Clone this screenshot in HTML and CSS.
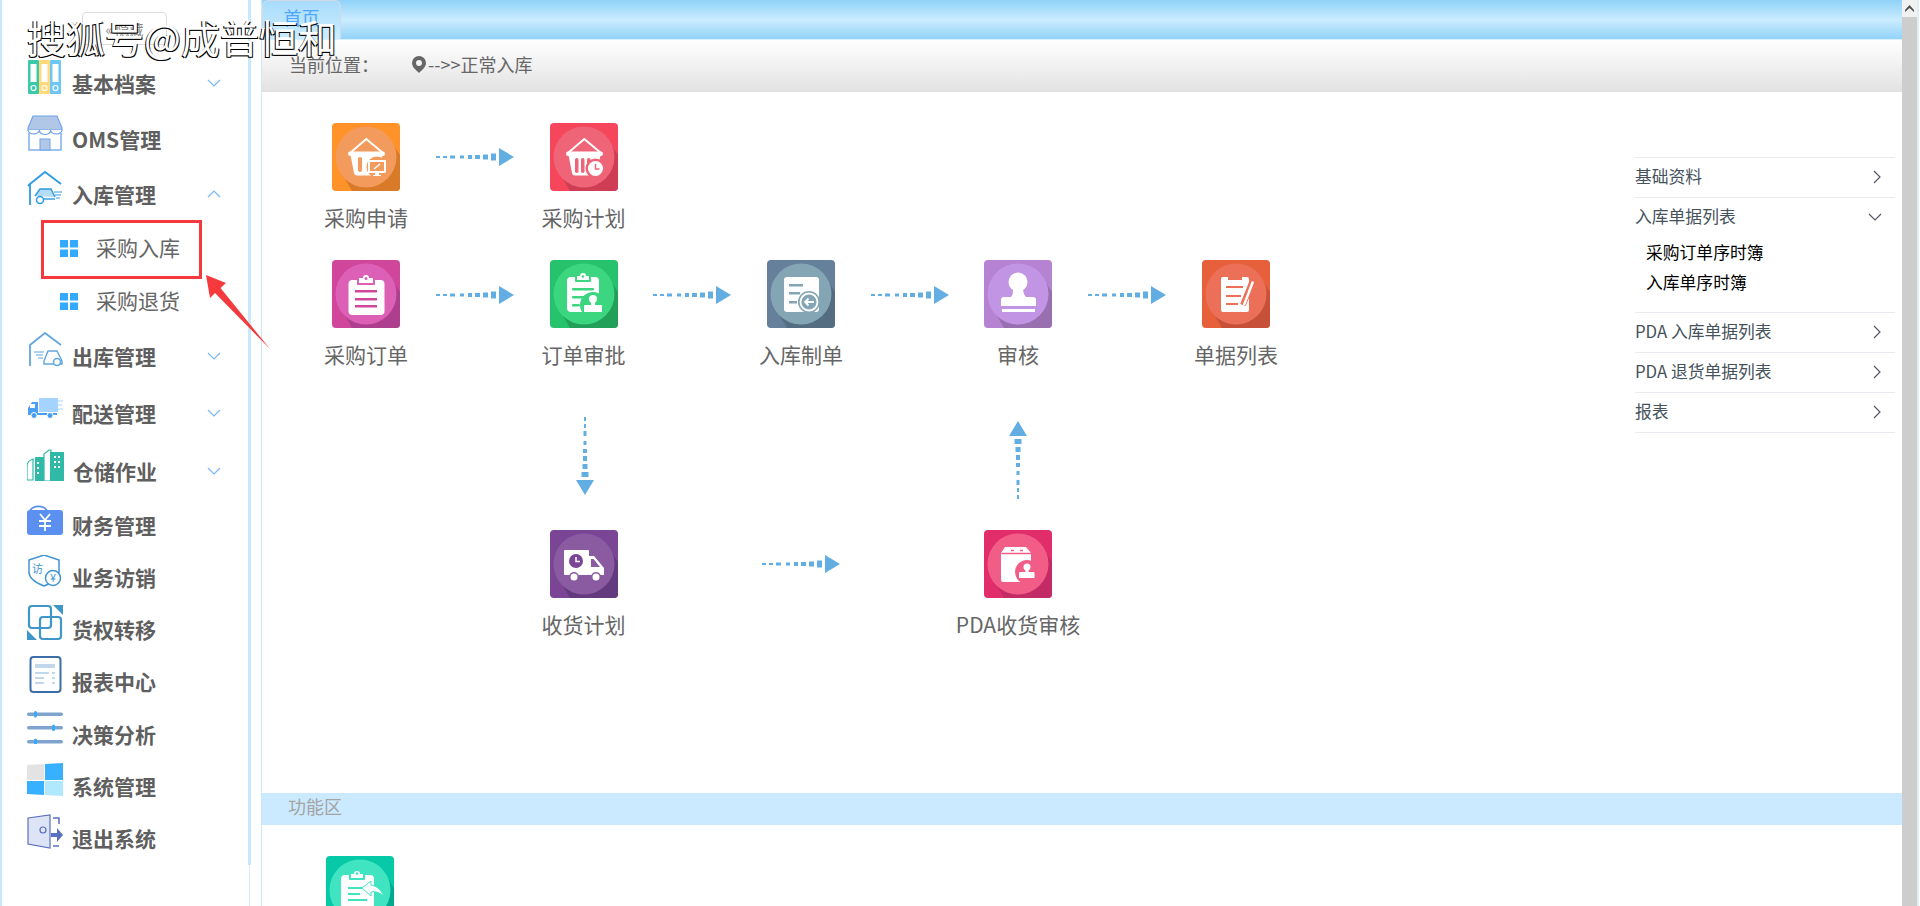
FILE: index.html
```html
<!DOCTYPE html>
<html lang="zh-CN">
<head>
<meta charset="utf-8">
<title>正常入库</title>
<link rel="stylesheet" href="styles.css">
</head>
<body>
<svg class="defs" width="0" height="0" aria-hidden="true">
  <symbol id="flow-arrow" viewBox="0 0 78 18">
    <rect x="0" y="8" width="4" height="2"/><rect x="7" y="8" width="4" height="2"/>
    <rect x="14" y="7.5" width="5" height="3"/><rect x="24" y="7.5" width="4" height="3"/>
    <rect x="32" y="7" width="4" height="4"/><rect x="39" y="7" width="5" height="4"/>
    <rect x="47" y="6.5" width="5" height="5"/><rect x="55" y="5.5" width="5" height="7"/>
    <polygon points="63,0 78,9 63,18"/>
  </symbol>
  <symbol id="caret-down" viewBox="0 0 14 8"><path d="M1 1l6 6 6-6" fill="none" stroke="currentColor" stroke-width="1.2"/></symbol>
  <symbol id="caret-up" viewBox="0 0 14 8"><path d="M1 7l6-6 6 6" fill="none" stroke="currentColor" stroke-width="1.2"/></symbol>
  <symbol id="caret-right" viewBox="0 0 8 14"><path d="M1 1l6 6-6 6" fill="none" stroke="currentColor" stroke-width="1.2"/></symbol>
  <symbol id="tile-base" viewBox="0 0 68 68">
    <rect class="t-bg" width="68" height="68" rx="4"/>
    <path class="t-dk" d="M12 54L20 68H64a4 4 0 0 0 4-4V32L56 14z"/>
    <circle class="t-c" cx="34" cy="34" r="30.5"/>
  </symbol>
  <symbol id="basket" viewBox="0 0 68 68">
    <path d="M18 30L34.300 16 51 30" fill="none" stroke="#fff" stroke-width="2"/>
    <rect x="16" y="28.500" width="37" height="4.500" rx="2.200" fill="#fff"/>
    <path d="M18.500 32H50.500L47 50a3 3 0 0 1-3 2.500H25a3 3 0 0 1-3-2.500z" fill="#fff"/>
  </symbol>
</svg>

<div class="watermark">搜狐号@成普恒和</div>

<aside class="sidebar">
  <button class="collapse">« 隐藏</button>
  <ul class="menu">
    <li class="menu-item">
      <svg class="micon" width="36" height="34" viewBox="0 0 36 34"><rect x="1" width="11" height="34" rx="1" fill="#3cc9a8"/><rect x="12" width="11" height="34" rx="1" fill="#ffd97a"/><rect x="23" width="11" height="34" rx="1" fill="#6cc6f8"/><g fill="#fff"><rect x="3.500" y="4" width="6" height="18"/><rect x="14.500" y="4" width="6" height="18"/><rect x="25.500" y="4" width="6" height="18"/></g><g fill="none" stroke="#fff" stroke-width="1.200"><circle cx="6.500" cy="28" r="2.500"/><circle cx="17.500" cy="28" r="2.500"/><circle cx="28.500" cy="28" r="2.500"/></g></svg>
      <span class="mtext">基本档案</span>
      <svg class="caret"><use href="#caret-down"/></svg>
    </li>
    <li class="menu-item m4">
      <svg class="micon" width="36" height="36" viewBox="0 0 36 36"><path d="M2 18V35H34V18" fill="#fff" stroke="#7fb0ee" stroke-width="1.500"/><path d="M6 1H30L35 13V15H1V13z" fill="#b0c7e8" stroke="#6fa3ea" stroke-width="1.200"/><path d="M1 15a5.700 4.500 0 0 0 11.300 0a5.700 4.500 0 0 0 11.400 0a5.700 4.500 0 0 0 11.300 0" fill="#fff" stroke="#6fa3ea" stroke-width="1.200"/><rect x="13" y="24" width="10" height="11" fill="#b0c7e8" stroke="#6fa3ea"/></svg>
      <span class="mtext">OMS管理</span>
    </li>
    <li class="menu-item m3">
      <svg class="micon" width="36" height="36" viewBox="0 0 36 36"><path d="M3 35V14L18 2 34 14M3 14L1 16" fill="none" stroke="#2d9be0" stroke-width="1.800"/><path d="M8 26l5-7h11l4 8" fill="#b4dcf6" stroke="#2d9be0" stroke-width="1.400"/><path d="M11 29H28" stroke="#2d9be0" stroke-width="1.400"/><circle cx="13" cy="30" r="3.500" fill="#fff" stroke="#2d9be0" stroke-width="1.500"/><path d="M27 22h8M28 25h6M29 28h4" stroke="#2d9be0"/></svg>
      <span class="mtext">入库管理</span>
      <svg class="caret"><use href="#caret-up"/></svg>
    </li>
    <li class="menu-item sub m1">
      <svg class="grid4" width="18" height="17" viewBox="0 0 18 17"><rect width="8" height="7.500"/><rect x="10" width="8" height="7.500"/><rect y="9.500" width="8" height="7.500"/><rect x="10" y="9.500" width="8" height="7.500"/></svg>
      <span class="stext">采购入库</span>
    </li>
    <li class="menu-item sub m1">
      <svg class="grid4" width="18" height="17" viewBox="0 0 18 17"><rect width="8" height="7.500"/><rect x="10" width="8" height="7.500"/><rect y="9.500" width="8" height="7.500"/><rect x="10" y="9.500" width="8" height="7.500"/></svg>
      <span class="stext">采购退货</span>
    </li>
    <li class="menu-item m4">
      <svg class="micon" width="36" height="35" viewBox="0 0 36 35"><path d="M3 34V13L18 1 34 13" fill="none" stroke="#62a6dc" stroke-width="1.800"/><path d="M7 20h10M9 23h7M11 26h5" stroke="#62a6dc" stroke-width="1.200"/><path d="M17 29l4-10h9l5 10v3H17z" fill="#fff" stroke="#62a6dc" stroke-width="1.400"/><circle cx="30" cy="30" r="3.500" fill="#fff" stroke="#62a6dc" stroke-width="1.500"/></svg>
      <span class="mtext">出库管理</span>
      <svg class="caret"><use href="#caret-down"/></svg>
    </li>
    <li class="menu-item m5">
      <svg class="micon tight" width="36" height="21" viewBox="0 0 36 21"><rect x="12" width="19" height="14" fill="#a4d4ff"/><path d="M11 4H5L1 10V17H30V15H11z" fill="#4a9ff2"/><rect x="3" y="6" width="5" height="4" fill="#fff"/><circle cx="7" cy="17.500" r="3" fill="#4a9ff2" stroke="#fff"/><circle cx="23" cy="17.500" r="3" fill="#4a9ff2" stroke="#fff"/><path d="M31 3h5M31 7h4M31 11h5" stroke="#a4d4ff"/></svg>
      <span class="mtext">配送管理</span>
      <svg class="caret"><use href="#caret-down"/></svg>
    </li>
    <li class="menu-item m6">
      <svg class="micon" width="37" height="32" viewBox="0 0 37 32"><path d="M0 31V18a8 8 0 0 1 6-8v21z" fill="none" stroke="#2fb9a6" stroke-width="1.200"/><rect x="8" y="8" width="9" height="24" fill="#2fb9a6"/><path d="M17 32V5l5-4h2v31z" fill="none" stroke="#2fb9a6" stroke-width="1.200"/><rect x="23" y="3" width="14" height="29" fill="#2fb9a6"/><g fill="#fff"><rect x="10" y="13" width="2" height="2"/><rect x="10" y="18" width="2" height="2"/><rect x="10" y="23" width="2" height="2"/><rect x="27" y="7" width="2" height="2"/><rect x="31" y="7" width="2" height="2"/><rect x="27" y="12" width="2" height="2"/><rect x="31" y="12" width="2" height="2"/><rect x="27" y="17" width="2" height="2"/><rect x="31" y="17" width="2" height="2"/></g></svg>
      <span class="mtext">仓储作业</span>
      <svg class="caret"><use href="#caret-down"/></svg>
    </li>
    <li class="menu-item m2">
      <svg class="micon" width="36" height="32" viewBox="0 0 36 32"><path d="M3 8a9 7 0 0 1 17 0" fill="none" stroke="#5b8ff0" stroke-width="1.800"/><rect y="7" width="36" height="25" rx="3" fill="#5b8ff0"/><path d="M13 11l5 6 5-6M18 17v11M12 18h12M12 23h12" fill="none" stroke="#fff" stroke-width="1.800"/></svg>
      <span class="mtext">财务管理</span>
    </li>
    <li class="menu-item">
      <svg class="micon" width="36" height="32" viewBox="0 0 36 32"><path d="M2 5L17 0l15 5v12c0 7-7 11-15 14C9 28 2 24 2 17z" fill="#fff" stroke="#3f96d0" stroke-width="1.500"/><text x="5" y="18" class="shield-text">访</text><circle cx="26" cy="23" r="7.500" fill="#fff" stroke="#3f96d0" stroke-width="1.500"/><text x="26" y="27" class="yen-text">¥</text></svg>
      <span class="mtext">业务访销</span>
    </li>
    <li class="menu-item">
      <svg class="micon" width="36" height="37" viewBox="0 0 36 37"><g fill="none" stroke="#3f96c8" stroke-width="2.200"><rect x="2" y="2" width="22" height="22" rx="3"/><rect x="13" y="13" width="21" height="22" rx="3"/></g><path d="M26 1L36 1V11zM0 26L10 36H0z" fill="#3f96c8"/></svg>
      <span class="mtext">货权转移</span>
    </li>
    <li class="menu-item">
      <svg class="micon" width="36" height="37" viewBox="0 0 36 37"><rect x="3.500" y="1" width="30" height="35" rx="3" fill="#fff" stroke="#3d6ea8" stroke-width="2"/><rect x="8" y="8" width="20" height="4" fill="#c2d6ec"/><g fill="#c2d6ec"><rect x="8" y="16" width="14" height="2"/><rect x="25" y="16" width="3" height="2"/><rect x="8" y="21" width="9" height="2"/><rect x="25" y="21" width="3" height="2"/><rect x="8" y="26" width="9" height="2"/><rect x="25" y="26" width="3" height="2"/></g></svg>
      <span class="mtext">报表中心</span>
    </li>
    <li class="menu-item m1">
      <svg class="micon" width="36" height="33" viewBox="0 0 36 33"><g fill="#7ea3cc"><rect y="1.500" width="36" height="3.500" rx="1.700"/><rect y="15" width="36" height="3.500" rx="1.700"/><rect y="29" width="36" height="3.500" rx="1.700"/></g><g fill="#33aaff"><rect x="7" y="0" width="3" height="6.500" rx="1.500"/><rect x="25" y="13.500" width="3" height="6.500" rx="1.500"/><rect x="7" y="27.500" width="3" height="6.500" rx="1.500"/></g></svg>
      <span class="mtext">决策分析</span>
    </li>
    <li class="menu-item">
      <svg class="micon" width="36" height="33" viewBox="0 0 36 33"><path d="M0 2L17 1V17H0z" fill="#e3e3e3"/><path d="M18 1L36 0V17H18z" fill="#36b0ff"/><path d="M0 18H17V32L0 31z" fill="#36b0ff"/><path d="M18 18H36V33L18 32z" fill="#b0e8ff"/></svg>
      <span class="mtext">系统管理</span>
    </li>
    <li class="menu-item">
      <svg class="micon" width="36" height="35" viewBox="0 0 36 35"><path d="M1 4L23 1V34L1 30z" fill="#dde4f5" stroke="#5a6fc0" stroke-width="1.200"/><circle cx="16" cy="16" r="3" fill="none" stroke="#5a6fc0" stroke-width="1.200"/><path d="M26 4h6v6M26 32h6" fill="none" stroke="#5a6fc0" stroke-width="1.500"/><path d="M24 19h6v-5l6 7-6 7v-5h-6z" fill="#5a6fc0"/></svg>
      <span class="mtext">退出系统</span>
    </li>
  </ul>
  <div class="callout-box"></div>
  <svg class="callout-arrow" width="66" height="76" viewBox="0 0 66 76"><polygon points="1,1 21,9 15.500,14 65,75 10,19 5,24" fill="#f5393c"/></svg>
</aside>

<main class="main">
  <nav class="tabbar"><div class="tab">首页</div></nav>
  <div class="crumb">
    <span class="crumb-label">当前位置：</span>
    <svg class="pin" width="14" height="17" viewBox="0 0 14 17"><path fill-rule="evenodd" d="M7 0a7 7 0 0 1 7 7c0 4-4 7-7 10C4 14 0 11 0 7a7 7 0 0 1 7-7zm0 4a3 3 0 1 0 0 6 3 3 0 0 0 0-6z" fill="#666"/></svg>
    <span>--&gt;&gt;正常入库</span>
  </div>

  <section class="workspace">
    <div class="diagram">
      <svg class="flow a-r1"><use href="#flow-arrow"/></svg>
      <svg class="flow a-r2a"><use href="#flow-arrow"/></svg>
      <svg class="flow a-r2b"><use href="#flow-arrow"/></svg>
      <svg class="flow a-r2c"><use href="#flow-arrow"/></svg>
      <svg class="flow a-r2d"><use href="#flow-arrow"/></svg>
      <svg class="flow a-r3"><use href="#flow-arrow"/></svg>
      <svg class="flow a-down"><use href="#flow-arrow"/></svg>
      <svg class="flow a-up"><use href="#flow-arrow"/></svg>

      <div class="node c1 r1 orange">
        <svg class="tile" viewBox="0 0 68 68"><use href="#tile-base"/><use href="#basket"/><rect class="cut" x="26" y="34" width="4" height="15" rx="2"/><circle class="cut" cx="45" cy="44" r="10.500"/><rect x="36" y="37" width="18" height="13" rx="1" fill="#fff"/><rect class="cut" x="38" y="39" width="14" height="9"/><path d="M42 46l6-5" stroke="#fff" stroke-width="1.500"/><path d="M43 50h4v2h2v1h-8v-1h2z" fill="#fff"/></svg>
        <div class="label">采购申请</div>
      </div>
      <div class="node c2 r1 red">
        <svg class="tile" viewBox="0 0 68 68"><use href="#tile-base"/><use href="#basket"/><g class="cut"><rect x="25" y="35" width="3.500" height="15" rx="1.700"/><rect x="31" y="35" width="3.500" height="15" rx="1.700"/><rect x="37" y="35" width="3.500" height="12" rx="1.700"/></g><circle class="cut" cx="45.500" cy="45.500" r="10"/><circle cx="45.500" cy="45.500" r="7.500" fill="#fff"/><path class="cut-line" d="M45.500 41v5h4"/></svg>
        <div class="label">采购计划</div>
      </div>
      <div class="node c1 r2 pink">
        <svg class="tile" viewBox="0 0 68 68"><use href="#tile-base"/><rect x="16.500" y="20" width="36" height="35" rx="4" fill="#fff"/><rect class="cut" x="25" y="16" width="18" height="9" rx="1"/><path d="M27 23v-5h4a3 3 0 0 1 6 0h4v5z" fill="#fff"/><circle class="cut" cx="34" cy="18.500" r="1.500"/><g class="bar"><rect x="23" y="30" width="22" height="2.500"/><rect x="23" y="38" width="22" height="2.500"/><rect x="23" y="45" width="22" height="2.500"/></g></svg>
        <div class="label">采购订单</div>
      </div>
      <div class="node c2 r2 green">
        <svg class="tile" viewBox="0 0 68 68"><use href="#tile-base"/><rect x="17" y="17" width="32" height="35" rx="4" fill="#fff"/><rect class="cut" x="25" y="14" width="16" height="8" rx="1"/><path d="M27 20v-4h3a3 3 0 0 1 6 0h3v4z" fill="#fff"/><circle class="cut" cx="33" cy="16.500" r="1.300"/><g class="bar"><rect x="22" y="28" width="22" height="2.500" rx="1.200"/><rect x="22" y="36" width="14" height="2.500" rx="1.200"/><rect x="22" y="44" width="8" height="2.500" rx="1.200"/></g><circle class="cut" cx="43" cy="45" r="13"/><circle cx="43" cy="39" r="4" fill="#fff"/><path d="M41 41h4v4h6a1 1 0 0 1 1 1v6H34v-6a1 1 0 0 1 1-1h6z" fill="#fff"/></svg>
        <div class="label">订单审批</div>
      </div>
      <div class="node c3 r2 slate">
        <svg class="tile" viewBox="0 0 68 68"><use href="#tile-base"/><rect x="17" y="17" width="35" height="35" rx="3" fill="#fff"/><g class="bar"><rect x="22" y="24" width="14" height="2.500"/><rect x="22" y="32" width="11" height="2.500"/><rect x="22" y="41" width="8" height="2.500"/></g><circle class="cut" cx="42" cy="42" r="11"/><circle cx="42" cy="42" r="8.500" fill="none" stroke="#fff" stroke-width="1.800"/><path d="M47 42H38M41.500 38.500L38 42l3.500 3.500" fill="none" stroke="#fff" stroke-width="1.800"/></svg>
        <div class="label">入库制单</div>
      </div>
      <div class="node c4 r2 violet">
        <svg class="tile" viewBox="0 0 68 68"><use href="#tile-base"/><circle cx="34" cy="22" r="9.500" fill="#fff"/><path d="M29 28h10c0 4 1 7 3 9h7a3 3 0 0 1 3 3v6H17v-6a3 3 0 0 1 3-3h7c2-2 2-5 2-9z" fill="#fff"/><rect x="18" y="49" width="33" height="3" fill="#fff"/></svg>
        <div class="label">审核</div>
      </div>
      <div class="node c5 r2 coral">
        <svg class="tile" viewBox="0 0 68 68"><use href="#tile-base"/><rect x="19" y="17" width="28" height="35" rx="2" fill="#fff"/><rect class="bar" x="26" y="17" width="14" height="3"/><g class="bar"><rect x="24" y="26" width="17" height="2"/><rect x="24" y="35" width="15" height="2"/><rect x="24" y="43" width="12" height="2"/></g><path d="M51 20L41 45" stroke="#ec7058" stroke-width="6"/><path d="M51 21.500L42 45" stroke="#fff" stroke-width="2.500"/></svg>
        <div class="label">单据列表</div>
      </div>
      <div class="node c2 r3 plum">
        <svg class="tile" viewBox="0 0 68 68"><use href="#tile-base"/><rect x="14" y="20" width="25" height="25" rx="1" fill="#fff"/><path d="M39 26h5l10 12v7H39z" fill="#fff"/><path class="cut" d="M41 29h2.500L50 37h-9z"/><circle cx="26" cy="31" r="7" fill="#7b4595"/><path d="M26 27v4.500h4" fill="none" stroke="#fff" stroke-width="1.500"/><circle cx="24" cy="47" r="5" class="cut"/><circle cx="24" cy="47" r="3.500" fill="#fff"/><circle cx="46" cy="47" r="5" class="cut"/><circle cx="46" cy="47" r="3.500" fill="#fff"/></svg>
        <div class="label">收货计划</div>
      </div>
      <div class="node c4 r3 rose">
        <svg class="tile" viewBox="0 0 68 68"><use href="#tile-base"/><path d="M21 17H42L47 23V52H19a2 2 0 0 1-2-2V23z" fill="#fff"/><path class="cut-line" d="M17.500 23.500H47M27 20.500h3M36 20.500h3"/><circle class="cut" cx="43" cy="42" r="12"/><circle cx="43" cy="37" r="3.500" fill="#fff"/><path d="M41.500 39h3v3h5a1 1 0 0 1 1 1v5H35v-5a1 1 0 0 1 1-1h5.500z" fill="#fff"/></svg>
        <div class="label">PDA收货审核</div>
      </div>
    </div>

    <ul class="side-panel">
      <li class="panel-row"><span class="ptext">基础资料</span><svg class="chev"><use href="#caret-right"/></svg></li>
      <li class="panel-row open"><span class="ptext">入库单据列表</span><svg class="chev-d"><use href="#caret-down"/></svg></li>
      <li class="panel-sub"><div>采购订单序时簿</div><div>入库单序时簿</div></li>
      <li class="panel-row"><span class="ptext">PDA 入库单据列表</span><svg class="chev"><use href="#caret-right"/></svg></li>
      <li class="panel-row"><span class="ptext">PDA 退货单据列表</span><svg class="chev"><use href="#caret-right"/></svg></li>
      <li class="panel-row last"><span class="ptext">报表</span><svg class="chev"><use href="#caret-right"/></svg></li>
    </ul>
  </section>

  <h2 class="section-bar">功能区</h2>
  <div class="func-area">
    <div class="node-static teal">
      <svg class="tile" viewBox="0 0 68 68"><use href="#tile-base"/><rect x="15" y="19" width="33" height="36" rx="4" fill="#fff"/><rect class="cut" x="23" y="15" width="16" height="9" rx="1"/><path d="M25 22v-4h3a3 3 0 0 1 6 0h3v4z" fill="#fff"/><circle class="cut" cx="31" cy="17.500" r="1.300"/><g class="bar"><rect x="22" y="31" width="19" height="2"/><rect x="22" y="37" width="12" height="2"/><rect x="22" y="43" width="19" height="2"/></g><path d="M36 32l9-7v4c6 1 10 5 13 11-4-3-8-5-13-4v4z" fill="#fff" stroke="#40e4c0"/></svg>
    </div>
  </div>
</main>

<div class="scrollbar"><div class="scroll-up"><svg width="9" height="7" viewBox="0 0 9 7"><path d="M4.500 0L9 5v2L4.500 3 0 7V5z" fill="#505050"/></svg></div></div>
</body>
</html>
```

FILE: styles.css
```css
* { box-sizing: border-box; }
html, body { margin: 0; height: 906px; overflow: hidden; }
body {
  display: flex;
  background: #fff;
  font-family: "Noto Sans CJK SC", "Noto Sans", sans-serif;
  color: #666;
}
ul { list-style: none; margin: 0; padding: 0; }
.defs { position: absolute; }

.watermark {
  position: absolute;
  left: 27px;
  top: 12px;
  z-index: 5;
  font-size: 39px;
  line-height: 48px;
  color: #fff;
  white-space: nowrap;
  text-shadow: -1px 1px 0 #000, 1px 1px 0 #000;
}

/* sidebar */
.sidebar {
  position: relative;
  width: 251px;
  height: 906px;
  flex: none;
  border-left: 2px solid #c8e9fc;
  background: linear-gradient(#c8e9fc, #c8e9fc) 246px 0 / 3px 865px no-repeat,
              linear-gradient(#dcecf7, #dcecf7) 247px 0 / 1px 906px no-repeat;
}
.collapse {
  display: block;
  width: 85px;
  height: 33px;
  margin: 12px 0 13px 80px;
  padding: 0;
  background: #fff;
  border: 1px solid #ddd;
  border-radius: 4px;
  color: #888;
  font: 14px "Noto Sans CJK SC", sans-serif;
}
.menu-item {
  display: flex;
  align-items: center;
  height: 52px;
  padding-left: 25px;
  position: relative;
}
.m1 { margin-top: 1px; }
.m2 { margin-top: 2px; }
.m3 { margin-top: 3px; }
.m4 { margin-top: 4px; }
.m5 { margin-top: 5px; }
.m6 { margin-top: 6px; }
.micon { flex: none; margin-bottom: 15px; margin-right: 9px; }
.micon.tight { margin-bottom: 12px; }
.mtext {
  font-size: 21px;
  line-height: 28px;
  font-weight: 700;
  color: #5f5f5f;
  white-space: nowrap;
  margin-bottom: 2px;
}
.caret {
  position: absolute;
  left: 205px;
  top: 21px;
  width: 14px;
  height: 8px;
  color: #7ab8f5;
}
.sub { padding-left: 58px; color: #666; }
.stext { font-size: 21px; line-height: 28px; margin-bottom: 2px; }
.grid4 { fill: #33aaff; margin-right: 18px; flex: none; }
.shield-text { font: 11px "Noto Sans CJK SC", sans-serif; fill: #3f96d0; }
.yen-text { font: 10px "Liberation Sans", sans-serif; fill: #3f96d0; text-anchor: middle; }
.callout-box {
  position: absolute;
  left: 39px;
  top: 220px;
  width: 161px;
  height: 59px;
  border: 3px solid #f5393c;
}
.callout-arrow { position: absolute; left: 203px; top: 274px; overflow: visible; }

/* main */
.main {
  flex: none;
  width: 1641px;
  margin-left: 10px;
  height: 906px;
  border-left: 1px solid #cfe6f8;
  overflow: hidden;
  display: flex;
  flex-direction: column;
}
.tabbar {
  height: 40px;
  flex: none;
  background: linear-gradient(#8fd2f8 0, #cbecff 50%, #92d3f9 97%, #d8f0ff 97%);
}
.tab {
  width: 79px;
  height: 39px;
  border: 1px solid #cfdbe6;
  border-bottom: 0;
  border-radius: 6px 6px 0 0;
  background: linear-gradient(#a8dcfb, #cdedff);
  color: #4da6ff;
  font-size: 18px;
  line-height: 33px;
  text-align: center;
}
.crumb {
  height: 52px;
  flex: none;
  display: flex;
  align-items: center;
  padding-left: 27px;
  padding-bottom: 4px;
  font-size: 18px;
  line-height: 24px;
  color: #666;
  background: linear-gradient(#fff, #e2e2e2);
}
.crumb-label { width: 123px; }
.pin { flex: none; margin-right: 2px; }

.workspace { height: 701px; flex: none; display: flex; }
.diagram { position: relative; flex: 1; }
.flow {
  position: absolute;
  width: 78px;
  height: 18px;
  fill: #62aee3;
}
.a-r1 { left: 174px; top: 56px; }
.a-r2a { left: 174px; top: 194px; }
.a-r2b { left: 391px; top: 194px; }
.a-r2c { left: 609px; top: 194px; }
.a-r2d { left: 826px; top: 194px; }
.a-r3 { left: 500px; top: 463px; }
.a-down { left: 284px; top: 355px; transform: rotate(90deg); }
.a-up { left: 717px; top: 359px; transform: rotate(-90deg); }

.node {
  position: absolute;
  width: 160px;
  display: flex;
  flex-direction: column;
  align-items: center;
}
.c1 { left: 24px; }
.c2 { left: 241.500px; }
.c3 { left: 459px; }
.c4 { left: 676px; }
.c5 { left: 894px; }
.r1 { top: 31px; }
.r2 { top: 168px; }
.r3 { top: 438px; }
.tile { width: 68px; height: 68px; display: block; flex: none; }
.label {
  margin-top: 12px;
  font-size: 21px;
  line-height: 28px;
  color: #666;
  white-space: nowrap;
}
.t-bg { fill: var(--bg); }
.t-dk { fill: var(--dk); }
.t-c, .cut { fill: var(--c); }
.bar { fill: var(--bar); }
.cut-line { fill: none; stroke: var(--c); stroke-width: 1.500; }
.orange { --bg: #ff9228; --dk: #d97a28; --c: #f39b5c; --bar: #f39b5c; }
.red { --bg: #f6465c; --dk: #cf3d54; --c: #ef6477; --bar: #ef6477; }
.pink { --bg: #d0469b; --dk: #ae3f8e; --c: #dc60b6; --bar: #d0469b; }
.green { --bg: #27c26c; --dk: #22a05a; --c: #3bd67f; --bar: #3bd67f; }
.slate { --bg: #667f9a; --dk: #546d80; --c: #83a5b4; --bar: #83a5b4; }
.violet { --bg: #b682d2; --dk: #9870b0; --c: #c294e4; --bar: #c294e4; }
.coral { --bg: #e5603b; --dk: #c65038; --c: #ec7058; --bar: #ec7058; }
.plum { --bg: #7b4595; --dk: #643a7e; --c: #8a5ba0; --bar: #8a5ba0; }
.rose { --bg: #e12e6a; --dk: #c22b66; --c: #f25d87; --bar: #f25d87; }
.teal { --bg: #06c9a8; --dk: #00aa8e; --c: #40e4c0; --bar: #40e4c0; }

.side-panel {
  width: 260px;
  flex: none;
  margin: 65px 7px 0 0;
  color: #45525c;
  font-size: 16.800px;
  line-height: 24px;
}
.panel-row {
  height: 40px;
  border-top: 1px solid #e8ecf2;
  display: flex;
  align-items: center;
  justify-content: space-between;
  padding-right: 14px;
  white-space: nowrap;
}
.panel-row.open { padding-right: 13px; }
.panel-row.last { height: 41px; border-bottom: 1px solid #e8ecf2; }
.ptext { margin-bottom: 3px; }
.chev { width: 8px; height: 14px; color: #556; margin-bottom: 2px; }
.chev-d { width: 14px; height: 8px; color: #556; margin-bottom: 2px; }
.panel-sub {
  height: 75px;
  padding-left: 11px;
  color: #000;
  line-height: 30px;
}

.section-bar {
  height: 32px;
  flex: none;
  margin: 0;
  padding-left: 26px;
  background: #cbeaff;
  color: #a3a3a3;
  font-size: 18px;
  font-weight: 400;
  line-height: 26px;
}
.func-area { padding: 31px 0 0 64px; flex: none; height: 200px; }

.scrollbar {
  flex: none;
  width: 17px;
  margin-left: 0;
  height: 906px;
  background: #cdcdcd;
  border-right: 2px solid #dfeff7;
}
.scroll-up {
  height: 17px;
  background: #f1f1f1;
  display: flex;
  align-items: center;
  justify-content: center;
}
```
